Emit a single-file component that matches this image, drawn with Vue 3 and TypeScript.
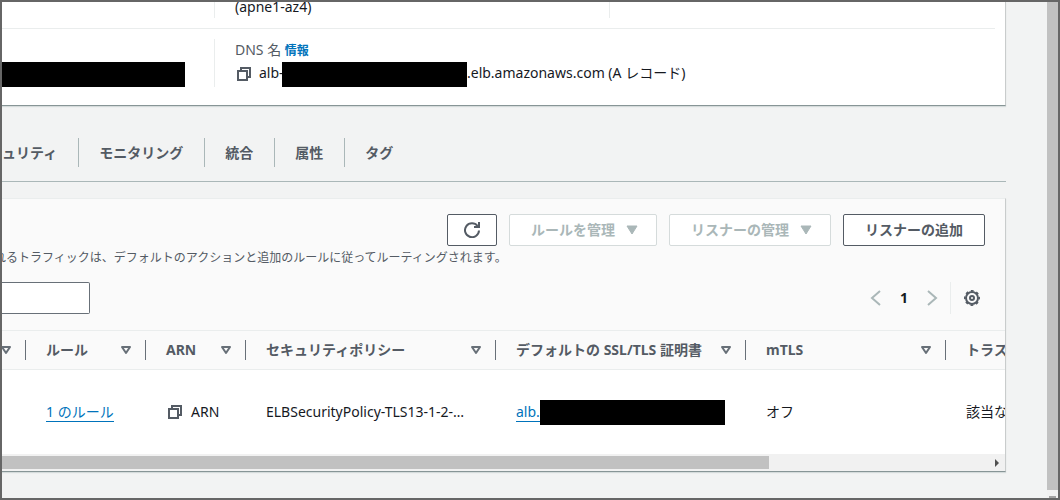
<script setup lang="ts">
interface Column {
  label: string
  width: number
}

const tabs: string[] = ['ュリティ', 'モニタリング', '統合', '属性', 'タグ']

const columns: Column[] = [
  { label: '', width: 24 },
  { label: 'ルール', width: 120 },
  { label: 'ARN', width: 100 },
  { label: 'セキュリティポリシー', width: 250 },
  { label: 'デフォルトの SSL/TLS 証明書', width: 250 },
  { label: 'mTLS', width: 200 },
  { label: 'トラストストア', width: 180 },
]
</script>

<template>
  <div class="window">
    <main class="page">
      <section class="panel details">
        <div class="row row-top">
          <div class="cell"></div>
          <div class="cell zone">(apne1-az4)</div>
          <div class="cell"></div>
        </div>
        <div class="row row-dns">
          <div class="cell masked"><span class="mask"></span></div>
          <div class="cell dns">
            <div class="label">DNS 名 <a href="#" class="info">情報</a></div>
            <div class="value">
              <button class="icon-button" type="button" aria-label="コピー">
                <svg width="16" height="16" viewBox="0 0 16 16" fill="none" stroke="currentColor" stroke-width="2">
                  <path d="M2 5h9v9H2z" />
                  <path d="M5 5V2h9v9h-3" />
                </svg>
              </button>
              <span class="host">alb-</span>
              <span class="mask"></span>
              <span>.elb.amazonaws.com (A レコード)</span>
            </div>
          </div>
        </div>
      </section>

      <nav class="tabs">
        <button v-for="tab in tabs" :key="tab" class="tab" type="button">{{ tab }}</button>
      </nav>

      <section class="panel listeners">
        <header class="toolbar">
          <button class="button refresh" type="button" aria-label="更新">
            <svg width="16" height="16" viewBox="0 0 16 16" fill="none" stroke="currentColor" stroke-width="2">
              <path d="M15 8.5A7 7 0 1 1 13.6 4" />
              <path d="M10 5h5V0" />
            </svg>
          </button>
          <button class="button" type="button" disabled>
            ルールを管理
            <svg width="16" height="16" viewBox="0 0 16 16" fill="currentColor"><path d="M3 4h10l-5 8z" stroke="currentColor" stroke-linejoin="round" /></svg>
          </button>
          <button class="button" type="button" disabled>
            リスナーの管理
            <svg width="16" height="16" viewBox="0 0 16 16" fill="currentColor"><path d="M3 4h10l-5 8z" stroke="currentColor" stroke-linejoin="round" /></svg>
          </button>
          <button class="button" type="button">リスナーの追加</button>
        </header>
        <p class="description">れるトラフィックは、デフォルトのアクションと追加のルールに従ってルーティングされます。</p>

        <div class="filters">
          <input class="search" type="text" aria-label="リスナーをフィルタリング" />
          <div class="pager">
            <button class="icon-button muted" type="button" aria-label="前へ">
              <svg width="16" height="16" viewBox="0 0 16 16" fill="none" stroke="currentColor" stroke-width="2"><path d="M12 1 4 8l8 7" /></svg>
            </button>
            <span class="page-number">1</span>
            <button class="icon-button muted" type="button" aria-label="次へ">
              <svg width="16" height="16" viewBox="0 0 16 16" fill="none" stroke="currentColor" stroke-width="2"><path d="m4 1 8 7-8 7" /></svg>
            </button>
            <span class="divider"></span>
            <button class="icon-button" type="button" aria-label="設定">
              <svg width="16" height="16" viewBox="0 0 16 16" fill="none" stroke="currentColor" stroke-width="2">
                <circle cx="8" cy="8" r="6" />
                <circle cx="8" cy="8" r="7.2" stroke-width="1.6" stroke-dasharray="2.83 2.825" stroke-dashoffset="1.4" />
                <circle cx="8" cy="8" r="2" />
              </svg>
            </button>
          </div>
        </div>

        <div class="table-area">
          <table>
            <colgroup>
              <col v-for="(column, i) in columns" :key="i" :style="{ width: column.width + 'px' }" />
            </colgroup>
            <thead>
              <tr>
                <th v-for="(column, i) in columns" :key="i" scope="col">
                  <div class="heading">
                    <span>{{ column.label }}</span>
                    <svg width="12" height="12" viewBox="0 0 12 12" fill="none" stroke="currentColor" stroke-width="2" stroke-linejoin="round">
                      <path d="M2 3h8L6 9z" />
                    </svg>
                  </div>
                </th>
              </tr>
            </thead>
            <tbody>
              <tr>
                <td></td>
                <td><a href="#" class="link">1 のルール</a></td>
                <td>
                  <div class="value">
                    <button class="icon-button" type="button" aria-label="ARN をコピー">
                      <svg width="16" height="16" viewBox="0 0 16 16" fill="none" stroke="currentColor" stroke-width="2">
                        <path d="M2 5h9v9H2z" />
                        <path d="M5 5V2h9v9h-3" />
                      </svg>
                    </button>
                    <span>ARN</span>
                  </div>
                </td>
                <td>ELBSecurityPolicy-TLS13-1-2-…</td>
                <td>
                  <div class="value certificate">
                    <a href="#" class="link">alb.</a><span class="mask"></span>
                  </div>
                </td>
                <td>オフ</td>
                <td>該当なし</td>
              </tr>
            </tbody>
          </table>
        </div>
        <div class="scroll-x">
          <span class="thumb-x"></span>
          <svg width="16" height="16" viewBox="0 0 16 16"><path d="M6 4v8l4-4z" fill="#505050" /></svg>
        </div>
      </section>
    </main>
    <div class="scroll-y">
      <span class="thumb-y"></span>
      <span class="arrow-y"></span>
    </div>
  </div>
</template>

<style>
body {
  margin: 0;
  background: #f2f3f3;
}
</style>

<style scoped>
.window {
  box-sizing: border-box;
  height: 100vh;
  border: 2px solid #666;
  display: flex;
  overflow: hidden;
  background: #f2f3f3;
  color: #16191f;
  font: 14px/22px "Noto Sans", "Noto Sans CJK JP", sans-serif;
}

.page {
  flex: 1;
  min-width: 0;
  padding-right: 41px;
}

.panel {
  border-right: 1px solid #c9cccc;
  border-bottom: 1px solid #879596;
  box-shadow: 0 1px 1px #d5dbdb;
  overflow: hidden;
}

.details {
  background: #fff;
}

.row {
  display: grid;
  grid-template-columns: 212px 395px 1fr;
  margin-right: 10px;
}

.row-top {
  height: 26px;
  border-bottom: 1px solid #eaeded;
}

.row-top .cell {
  height: 16px;
}

.cell + .cell {
  border-left: 1px solid #eaeded;
  padding-left: 20px;
}

.row-top .zone {
  line-height: 10px;
}

.row-dns {
  padding: 10px 0 18px;
}

.row-dns .cell {
  height: 48px;
}

.masked {
  display: flex;
  align-items: flex-end;
}

.mask {
  width: 185px;
  height: 25px;
  background: #000;
  flex: none;
}

.masked .mask {
  width: 183px;
}

.dns {
  white-space: nowrap;
}

.label {
  color: #545b64;
}

.info {
  color: #0073bb;
  font-size: 12px;
  font-weight: 700;
  text-decoration: none;
}

.value {
  display: flex;
  align-items: center;
}

.icon-button {
  display: flex;
  padding: 0;
  border: 0;
  background: none;
  color: #545b64;
}

.value .icon-button {
  margin: 0 8px 0 1px;
}

.dns .value {
  align-items: flex-start;
}

.dns .icon-button {
  margin-right: 7px;
  padding-top: 4px;
}

.host {
  width: 23px;
}

.tabs {
  display: flex;
  padding: 32px 0 14px;
  border-bottom: 1px solid #aab7b8;
  margin-bottom: 16px;
}

.tab {
  height: 29px;
  padding: 0 21px 0 20px;
  border: 0;
  border-right: 1px solid #aab7b8;
  background: none;
  color: #545b64;
  font: inherit;
  font-weight: 700;
  white-space: nowrap;
}

.tab:first-child {
  padding-left: 0;
}

.tab:last-child {
  border-right: 0;
}

.listeners {
  background: #fafafa;
  border-top: 1px solid #eaeded;
}

.toolbar {
  display: flex;
  justify-content: flex-end;
  gap: 12px;
  padding: 15px 20px 0 0;
}

.button {
  display: flex;
  align-items: center;
  gap: 9px;
  box-sizing: border-box;
  height: 32px;
  padding: 0 21px;
  border: 1px solid #545b64;
  border-radius: 2px;
  background: #fff;
  color: #545b64;
  font: inherit;
  font-weight: 700;
  white-space: nowrap;
}

.button:disabled {
  border-color: #d5dbdb;
  color: #aab7b8;
  padding: 0 16px 0 21px;
}

.refresh {
  padding: 0 16px;
}

.description {
  margin: 0 0 0 -8px;
  color: #545b64;
  font-size: 12px;
  line-height: 24px;
  white-space: nowrap;
}

.filters {
  display: flex;
  justify-content: space-between;
  align-items: center;
  padding: 12px 25px 16px 0;
}

.search {
  box-sizing: border-box;
  width: 88px;
  height: 32px;
  border: 1px solid #687078;
  border-left: 0;
  border-radius: 0 2px 2px 0;
  background: #fff;
  font: inherit;
}

.pager {
  display: flex;
  align-items: center;
}

.muted {
  color: #aab7b8;
}

.page-number {
  width: 40px;
  text-align: center;
  font-weight: 700;
}

.divider {
  height: 32px;
  border-left: 1px solid #eaeded;
  margin: 0 13px 0 10px;
}

.table-area {
  overflow: hidden;
  background: #fff;
}

table {
  width: 1124px;
  table-layout: fixed;
  border-collapse: collapse;
}

th {
  height: 38px;
  padding: 0;
  border-top: 1px solid #eaeded;
  border-bottom: 1px solid #eaeded;
  background: #fafafa;
  color: #545b64;
  font-weight: 700;
  text-align: left;
}

.heading {
  display: flex;
  align-items: center;
  justify-content: space-between;
  box-sizing: border-box;
  height: 20px;
  padding: 0 13px 0 20px;
  border-right: 1px solid #687078;
  white-space: nowrap;
}

th:first-child .heading {
  padding-left: 0;
  justify-content: flex-end;
}

.heading svg {
  flex: none;
  color: #687078;
}

td {
  height: 84px;
  padding: 0 0 0 20px;
  white-space: nowrap;
}

.link {
  display: inline-block;
  border-bottom: 1px solid #0073bb;
  color: #0073bb;
  line-height: 18px;
  text-decoration: none;
}

.certificate .link {
  width: 24px;
}

.scroll-x {
  display: flex;
  align-items: center;
  justify-content: space-between;
  height: 17px;
  background: #f1f1f1;
}

.thumb-x {
  width: 76.5%;
  height: 13px;
  background: #c1c1c1;
}

.scroll-y {
  display: flex;
  flex-direction: column;
  align-items: center;
  justify-content: space-between;
  width: 11px;
  background: #f1f1f1;
}

.thumb-y {
  width: 100%;
  height: calc(100% - 8px);
  background: #c1c1c1;
}

.arrow-y {
  width: 7px;
  height: 2px;
  background: #a3a3a3;
}
</style>
